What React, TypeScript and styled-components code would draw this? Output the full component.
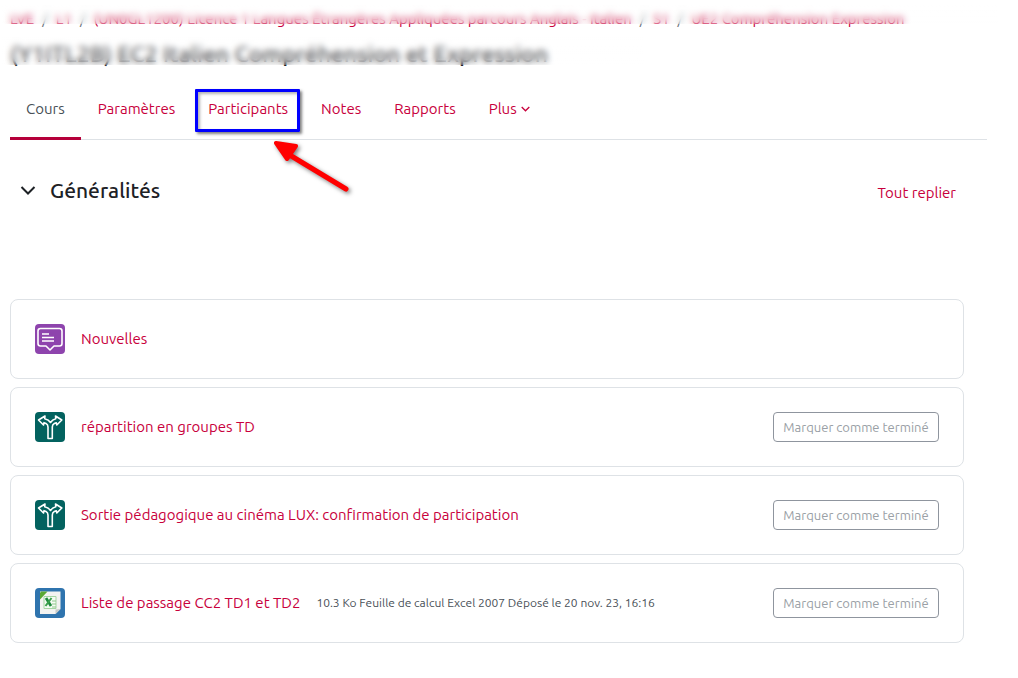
import React from "react";
import styled, { createGlobalStyle } from "styled-components";

const GlobalStyle = createGlobalStyle`
  *, *::before, *::after { box-sizing: border-box; }
  body {
    margin: 0;
    background: #fff;
    color: #1d2125;
    font-family: Ubuntu, "Noto Sans", "Open Sans", sans-serif;
    font-size: 15px;
    line-height: 22px;
  }
  a { color: #c8003c; text-decoration: none; }
  h1, h2, p, ul, ol { margin: 0; padding: 0; }
  ul, ol { list-style: none; }
`;

const Page = styled.main`
  padding: 8px 31px 32px 10px;
`;

const Redacted = styled.div`
  position: relative;
  white-space: nowrap;
`;

const Veil = styled.span<{ $top: number; $height: number; $width: number }>`
  position: absolute;
  left: -8px;
  top: ${(p) => p.$top}px;
  width: ${(p) => p.$width}px;
  height: ${(p) => p.$height}px;
  background: linear-gradient(rgba(255, 255, 255, 0.5), rgba(255, 255, 255, 0));
  backdrop-filter: blur(3px);
`;

const Crumbs = styled.ol`
  display: flex;
  height: 24px;
  li + li::before {
    content: "/";
    padding: 0 8px;
    color: #6a737b;
  }
`;

const Title = styled.h1`
  margin-top: 6px;
  font-size: 23px;
  font-weight: 500;
  line-height: 32px;
`;

const Tabs = styled.ul`
  display: flex;
  gap: 1px;
  margin-top: 8px;
  border-bottom: 1px solid #dee2e6;
`;

const Tab = styled.li`
  position: relative;
`;

const TabLink = styled.a<{ $active?: boolean }>`
  display: flex;
  align-items: center;
  gap: 4px;
  height: 62px;
  margin-bottom: -1px;
  padding: 2px 16px 0;
  border-bottom: 3px solid ${(p) => (p.$active ? "#b5003a" : "transparent")};
  color: ${(p) => (p.$active ? "#495057" : "#c8003c")};
`;

const Highlight = styled.span`
  position: absolute;
  inset: 11px 4px 7px 3px;
  border: 3px solid #00f;
  border-radius: 1px;
  box-shadow: 2px 2px 3px rgba(0, 0, 0, 0.5), inset 2px 2px 3px rgba(0, 0, 0, 0.3);
  pointer-events: none;
`;

const Arrow = styled.svg`
  position: absolute;
  left: 76px;
  top: 58px;
  filter: drop-shadow(2px 2px 2px rgba(0, 0, 0, 0.5));
  pointer-events: none;
`;

const Section = styled.section`
  margin-right: 23px;
`;

const SectionHeader = styled.header`
  display: flex;
  align-items: center;
  height: 100px;
  padding: 0 8px;
  margin-bottom: 59px;
`;

const Toggle = styled.button`
  display: flex;
  padding: 0;
  margin-right: 12px;
  border: 0;
  background: none;
  color: #1d2125;
`;

const Heading = styled.div`
  display: flex;
  flex: 1;
  align-items: baseline;
  justify-content: space-between;
`;

const SectionTitle = styled.h2`
  font-size: 21px;
  font-weight: 500;
  line-height: 28px;
`;

const Activities = styled.ul`
  display: grid;
  gap: 8px;
`;

const Activity = styled.li`
  display: flex;
  align-items: center;
  gap: 16px;
  height: 80px;
  padding: 0 24px;
  border: 1px solid #dee2e6;
  border-radius: 8px;
`;

const IconBox = styled.span<{ $color: string }>`
  display: flex;
  flex: none;
  width: 30px;
  height: 30px;
  border-radius: 4px;
  background: ${(p) => p.$color};
`;

const Details = styled.p`
  color: #495057;
  font-size: 12px;
`;

const Complete = styled.button`
  flex: none;
  width: 166px;
  height: 30px;
  margin-left: auto;
  padding: 0;
  border: 1px solid #8f959e;
  border-radius: 4px;
  background: #fff;
  color: #9a9fa6;
  font: inherit;
  font-size: 13px;
  white-space: nowrap;
`;

const ForumIcon = () => (
  <IconBox $color="#8e44ad">
    <svg width="30" height="30" viewBox="0 0 30 30" fill="none" stroke="#fff" strokeWidth="1.6" aria-hidden="true">
      <path d="M5.500 4.500h19q2.500 0 2.500 2.500v12.500q0 2.500-2.500 2.500H19l-4 4-4-4H5.500Q3 22 3 19.500V7q0-2.500 2.500-2.500z" strokeLinejoin="round" />
      <path d="M7 10h7M7 13.500h12M7 17h12" />
    </svg>
  </IconBox>
);

const ChoiceIcon = () => (
  <IconBox $color="#03625f">
    <svg width="30" height="30" viewBox="0 0 30 30" fill="none" stroke="#fff" strokeWidth="1.6" strokeLinejoin="round" aria-hidden="true">
      <path d="M13 26.500V15q0-2.500-2-3.500l-2-.800-.500 2.300-5-5 6.500-4-.300 2.700q4 .800 5.800 3.800 1.800-3 5.300-3.800L20.500 4l6.300 4-5 5-.500-2.300-2 .800q-2 1-2 3.500v11.500z" />
    </svg>
  </IconBox>
);

const SpreadsheetIcon = () => (
  <IconBox $color="#2f74ae">
    <svg width="30" height="30" viewBox="0 0 30 30" aria-hidden="true">
      <path d="M5 3.500h20.500v17.500l-5 5H5z" fill="#f3f3f1" />
      <path d="M25.500 21l-5 5v-4.500z" fill="#c5c9c7" />
      <path d="M6 3.500h6.500L5 11.500V5z" fill="#5aa832" />
      <path d="M9 8.500h12v12H9z" fill="#f5fbf3" stroke="#a5d6a3" />
      <path d="M17 13h4M17 16h4M17 19h4" stroke="#8fc98d" />
      <path d="M11 10l5 8" stroke="#1f8a3c" strokeWidth="2.800" />
      <path d="M16.500 10l-6 8" stroke="#3ba04c" strokeWidth="2" />
    </svg>
  </IconBox>
);

const activities = [
  { name: "Nouvelles", Icon: ForumIcon, details: "", completion: false },
  { name: "répartition en groupes TD", Icon: ChoiceIcon, details: "", completion: true },
  { name: "Sortie pédagogique au cinéma LUX: confirmation de participation", Icon: ChoiceIcon, details: "", completion: true },
  {
    name: "Liste de passage CC2 TD1 et TD2",
    Icon: SpreadsheetIcon,
    details: "10.3 Ko Feuille de calcul Excel 2007 Déposé le 20 nov. 23, 16:16",
    completion: true,
  },
];

const crumbs = [
  "LVE",
  "L1",
  "(UN0GL1200) Licence 1 Langues Étrangères Appliquées parcours Anglais - Italien",
  "S1",
  "UE2 Compréhension Expression",
];

const tabs = ["Cours", "Paramètres", "Participants", "Notes", "Rapports", "Plus"];

export default function App() {
  return (
    <>
      <GlobalStyle />
      <Page>
        <Redacted>
          <Crumbs>
            {crumbs.map((c) => (
              <li key={c}><a href="#">{c}</a></li>
            ))}
          </Crumbs>
          <Veil $top={-6} $height={22} $width={996} />
        </Redacted>
        <Redacted>
          <Title>(Y1ITL2B) EC2 Italien Compréhension et Expression</Title>
          <Veil $top={-1} $height={28} $width={642} />
        </Redacted>
        <nav>
          <Tabs>
            {tabs.map((t, i) => (
              <Tab key={t}>
                <TabLink href="#" $active={i === 0}>
                  {t}
                  {t === "Plus" && (
                    <svg width="9" height="6" viewBox="0 0 9 6" fill="none" stroke="currentColor" strokeWidth="1.3" aria-hidden="true">
                      <path d="M.7 1l3.800 3.800L8.300 1" />
                    </svg>
                  )}
                </TabLink>
                {t === "Participants" && (
                  <>
                    <Highlight />
                    <Arrow width="84" height="58" viewBox="0 0 84 58" aria-hidden="true">
                      <path d="M20 18L78 53" stroke="#f00" strokeWidth="5" strokeLinecap="round" />
                      <path d="M8 7L28 10 19 23z" fill="#f00" stroke="#f00" strokeWidth="4" strokeLinejoin="round" />
                    </Arrow>
                  </>
                )}
              </Tab>
            ))}
          </Tabs>
        </nav>
        <Section>
          <SectionHeader>
            <Toggle aria-label="Replier Généralités">
              <svg width="20" height="20" viewBox="0 0 20 20" fill="none" stroke="currentColor" strokeWidth="2" aria-hidden="true">
                <path d="M3.500 7l6.500 6.500L16.500 7" />
              </svg>
            </Toggle>
            <Heading>
              <SectionTitle>Généralités</SectionTitle>
              <a href="#">Tout replier</a>
            </Heading>
          </SectionHeader>
          <Activities>
            {activities.map(({ name, Icon, details, completion }) => (
              <Activity key={name}>
                <Icon />
                <a href="#">{name}</a>
                {details && <Details>{details}</Details>}
                {completion && <Complete>Marquer comme terminé</Complete>}
              </Activity>
            ))}
          </Activities>
        </Section>
      </Page>
    </>
  );
}
